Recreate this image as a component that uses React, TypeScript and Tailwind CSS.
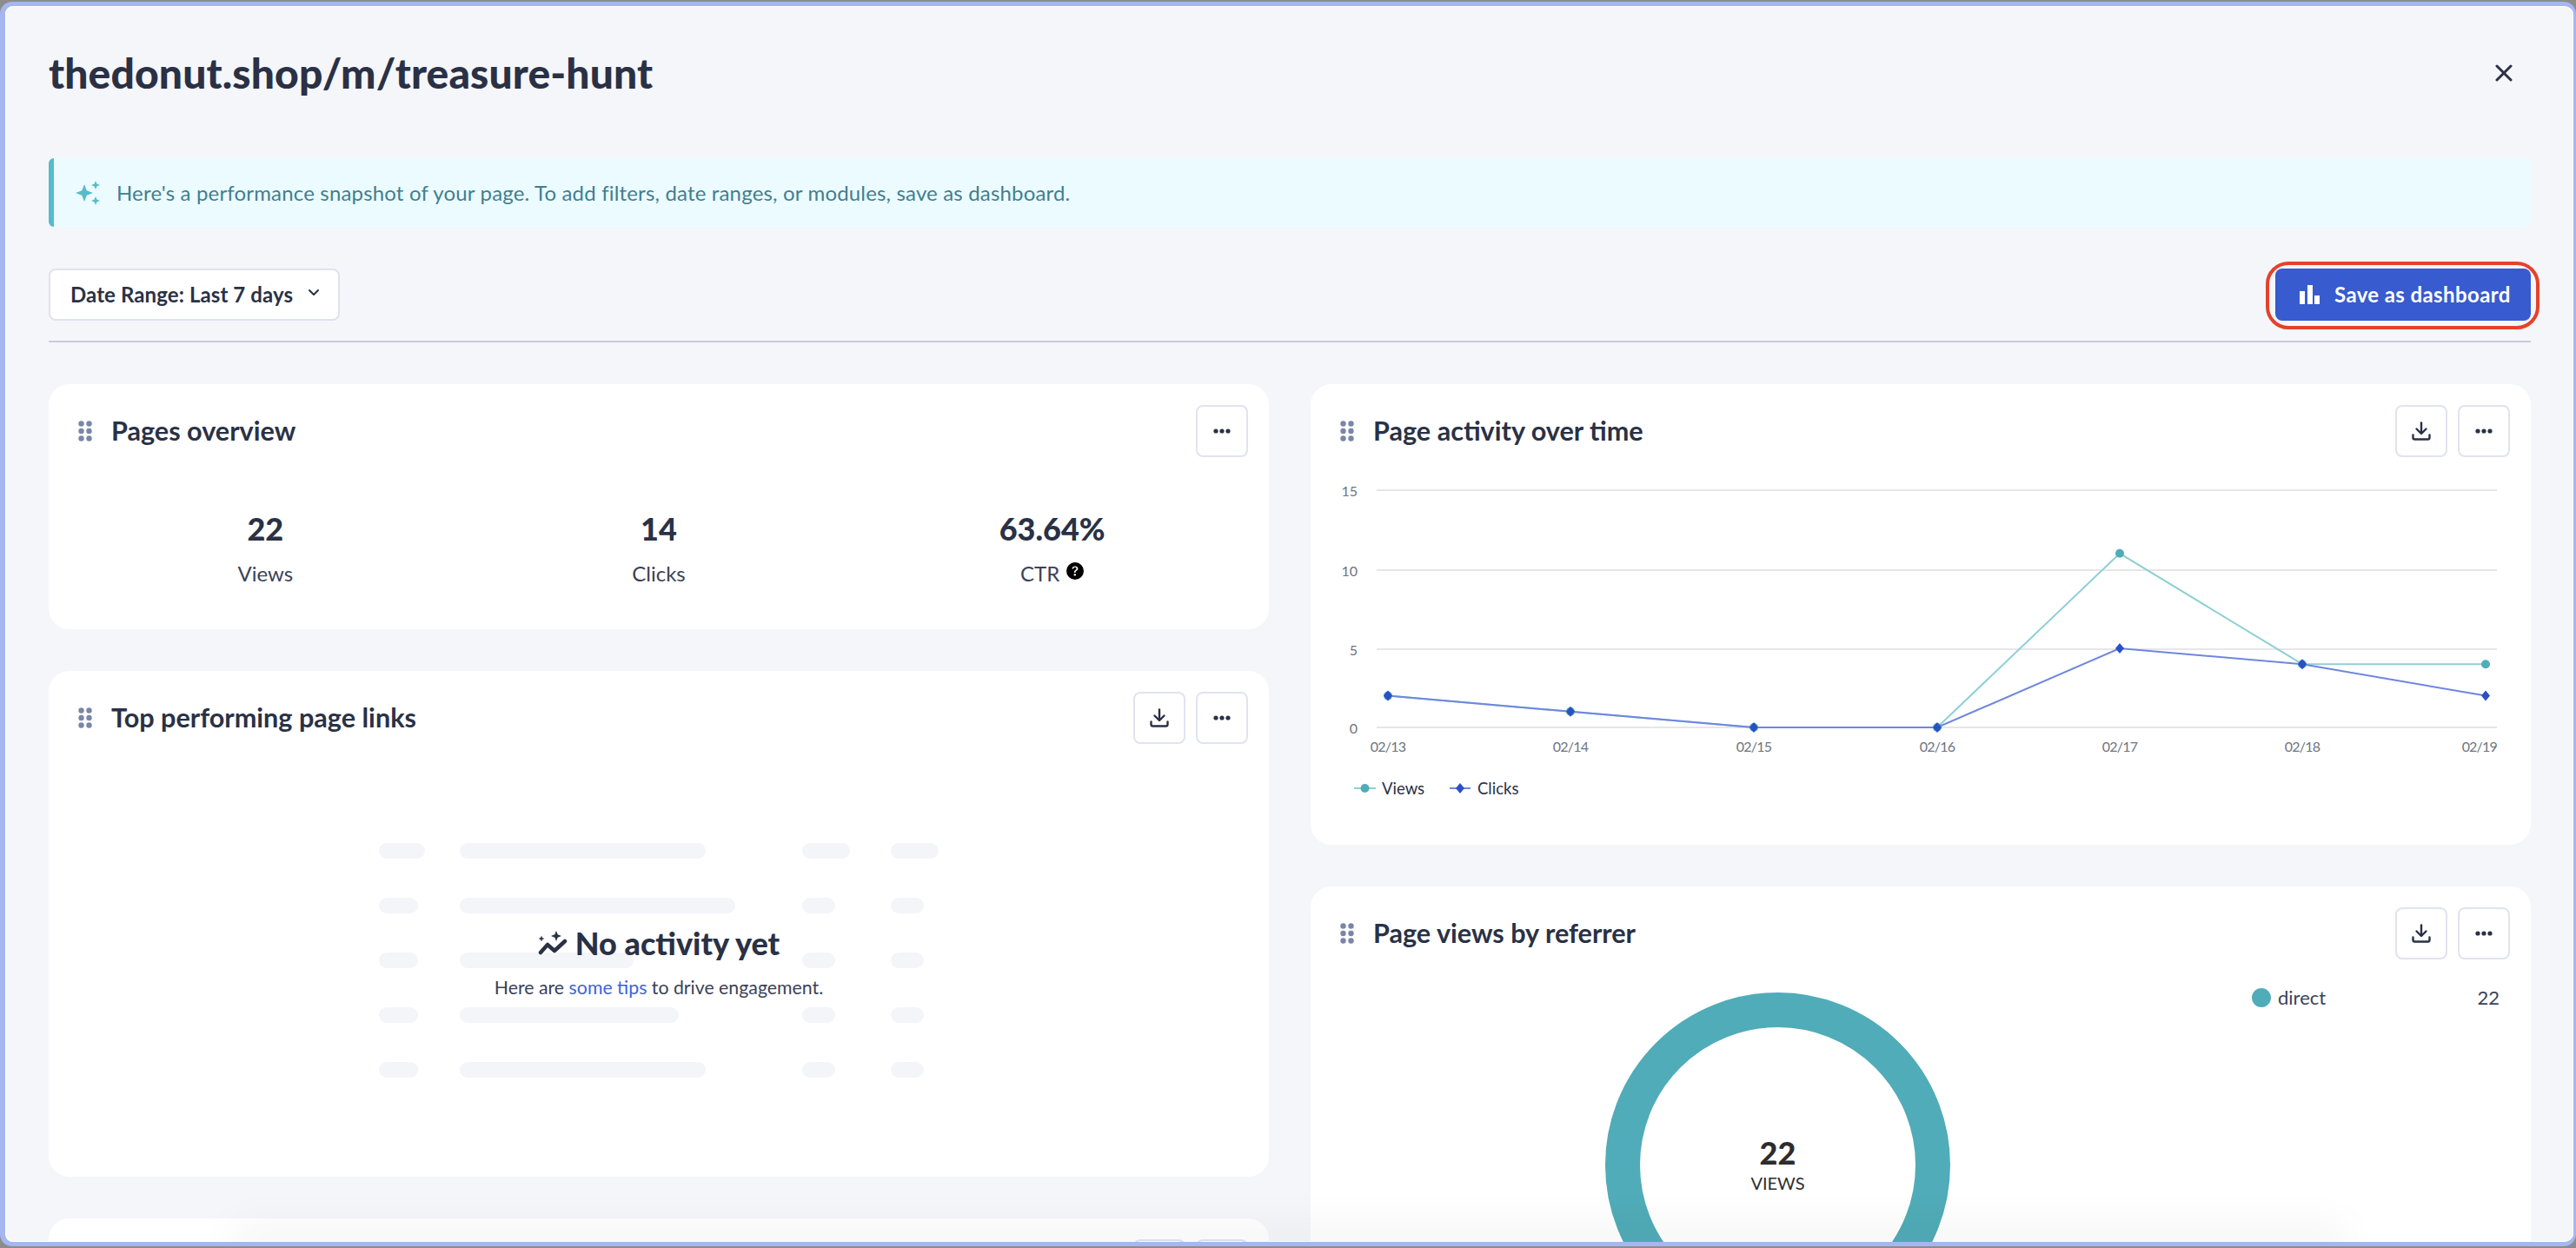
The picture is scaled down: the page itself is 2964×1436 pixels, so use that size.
import { BsQuestionCircleFill } from "react-icons/bs";

const VIEWS = [2, 1, 0, 0, 11, 4, 4];
const CLICKS = [2, 1, 0, 0, 5, 4, 2];
const DAYS = ["02/13", "02/14", "02/15", "02/16", "02/17", "02/18", "02/19"];
const XS = [89, 299, 510, 721, 931, 1141, 1352];
const GRID = [
  { label: "15", y: 38 },
  { label: "10", y: 130 },
  { label: "5", y: 221 },
  { label: "0", y: 311 },
];

const SKELETON = [
  [53, 283, 55, 55],
  [45, 317, 38, 38],
  [45, 200, 38, 38],
  [45, 252, 38, 38],
  [45, 283, 38, 38],
];

function valueY(v: number) {
  return 311 - v * 18.2;
}

function toPoints(values: number[]) {
  return values.map((v, i) => `${XS[i]},${valueY(v)}`).join(" ");
}

function star(cx: number, cy: number, r: number) {
  const k = r * 0.28;
  return `M${cx} ${cy - r}L${cx + k} ${cy - k}L${cx + r} ${cy}L${cx + k} ${cy + k}L${cx} ${cy + r}L${cx - k} ${cy + k}L${cx - r} ${cy}L${cx - k} ${cy - k}Z`;
}

function GripIcon() {
  return (
    <svg width="16" height="24" viewBox="0 0 16 24" className="shrink-0" fill="#7a86a8">
      <circle cx="3.5" cy="3.5" r="3.2" />
      <circle cx="12.5" cy="3.5" r="3.2" />
      <circle cx="3.5" cy="12" r="3.2" />
      <circle cx="12.5" cy="12" r="3.2" />
      <circle cx="3.5" cy="20.5" r="3.2" />
      <circle cx="12.5" cy="20.5" r="3.2" />
    </svg>
  );
}

function DownloadIcon() {
  return (
    <svg width="22" height="22" viewBox="0 0 22 22" fill="none" stroke="#2a3145" strokeWidth="2.4" strokeLinecap="round" strokeLinejoin="round">
      <path d="M11 1.5V13" />
      <path d="M5.5 8.5L11 14L16.5 8.5" />
      <path d="M1.5 15.5V18.5C1.5 19.6 2.4 20.5 3.5 20.5H18.5C19.6 20.5 20.5 19.6 20.5 18.5V15.5" />
    </svg>
  );
}

function DotsIcon() {
  return (
    <svg width="20" height="6" viewBox="0 0 20 6" fill="#2a3145">
      <circle cx="3" cy="3" r="2.6" />
      <circle cx="10" cy="3" r="2.6" />
      <circle cx="17" cy="3" r="2.6" />
    </svg>
  );
}

function IconButton({ children }: { children: React.ReactNode }) {
  return (
    <button className="flex h-[60px] w-[60px] items-center justify-center rounded-[8px] border-2 border-[#e1e3ef] bg-white">
      {children}
    </button>
  );
}

function CardHeader({ title, download = true }: { title: string; download?: boolean }) {
  return (
    <div className="flex h-[60px] items-center justify-between pr-[24px] pl-[34px]">
      <div className="flex items-center gap-[22px]">
        <GripIcon />
        <h3 className="mb-[1px] text-[30.6px] leading-[40px] font-bold text-[#2a3145]">{title}</h3>
      </div>
      <div className="flex gap-[12px]">
        {download ? (
          <IconButton>
            <DownloadIcon />
          </IconButton>
        ) : null}
        <IconButton>
          <DotsIcon />
        </IconButton>
      </div>
    </div>
  );
}

function Stat({ value, label, help }: { value: string; label: string; help?: boolean }) {
  return (
    <div className="flex flex-col items-center">
      <div className="text-[36px] leading-[44px] font-black text-[#2a3145]">{value}</div>
      <div className="mt-[14px] flex items-center gap-[8px] text-[24px] leading-[32px] text-[#3b4256]">
        {label}
        {help ? <BsQuestionCircleFill className="mb-[6px] text-[20px] text-black" /> : null}
      </div>
    </div>
  );
}

function ActivityChart() {
  return (
    <svg width="1404" height="400" viewBox="0 0 1404 400" className="block">
      {GRID.map((g) => (
        <g key={g.label}>
          <line x1="76" x2="1365" y1={g.y} y2={g.y} stroke="#e6e6e9" strokeWidth="2" />
          <text x="54" y={g.y + 7} textAnchor="end" fontSize="16" fill="#6f7480">
            {g.label}
          </text>
        </g>
      ))}
      {DAYS.map((d, i) => (
        <text
          key={d}
          x={i === 6 ? 1365 : XS[i]}
          y="339"
          textAnchor={i === 6 ? "end" : "middle"}
          fontSize="16"
          letterSpacing="-0.8"
          fill="#6f7480"
        >
          {d}
        </text>
      ))}
      <polyline points={toPoints(VIEWS)} fill="none" stroke="#8fd0d6" strokeWidth="2" />
      <polyline points={toPoints(CLICKS)} fill="none" stroke="#6f86de" strokeWidth="2" />
      {VIEWS.map((v, i) => (
        <circle key={i} cx={XS[i]} cy={valueY(v)} r="5" fill="#50acb8" />
      ))}
      {CLICKS.map((v, i) => (
        <path
          key={i}
          d={`M${XS[i]} ${valueY(v) - 6}L${XS[i] + 5} ${valueY(v)}L${XS[i]} ${valueY(v) + 6}L${XS[i] - 5} ${valueY(v)}Z`}
          fill="#2b4fc7"
        />
      ))}
      <line x1="50" x2="75" y1="381" y2="381" stroke="#8fd0d6" strokeWidth="2" />
      <circle cx="62.5" cy="381" r="5" fill="#50acb8" />
      <text x="82" y="388" fontSize="18.5" fill="#2a3145">
        Views
      </text>
      <line x1="160" x2="184" y1="381" y2="381" stroke="#6f86de" strokeWidth="2" />
      <path d="M172 375L177 381L172 387L167 381Z" fill="#2b4fc7" />
      <text x="192" y="388" fontSize="18.5" fill="#2a3145">
        Clicks
      </text>
    </svg>
  );
}

function EmptyActivity() {
  return (
    <div className="relative mt-[114px] w-full">
      <div className="mx-auto flex w-[644px] flex-col gap-[45px]">
        {SKELETON.map((row, i) => (
          <div key={i} className="flex h-[18px]">
            <div className="w-[93px]">
              <div className="h-[18px] rounded-full bg-[#f4f5f9]" style={{ width: row[0] }} />
            </div>
            <div className="w-[394px]">
              <div className="h-[18px] rounded-full bg-[#f4f5f9]" style={{ width: row[1] }} />
            </div>
            <div className="w-[102px]">
              <div className="h-[18px] rounded-full bg-[#f4f5f9]" style={{ width: row[2] }} />
            </div>
            <div>
              <div className="h-[18px] rounded-full bg-[#f4f5f9]" style={{ width: row[3] }} />
            </div>
          </div>
        ))}
      </div>
      <div className="absolute top-[93px] left-0 flex w-full flex-col items-center">
        <div className="flex h-[44px] items-center gap-[9px]">
          <svg width="34" height="30" viewBox="0 0 34 30" fill="#2a3145">
            <path d="M3 26L11 17L19 24L31 13" fill="none" stroke="#2a3145" strokeWidth="4.5" strokeLinecap="round" strokeLinejoin="round" />
            <path d={star(21, 7, 6)} />
            <path d={star(4, 10, 3.5)} />
          </svg>
          <span className="text-[36px] leading-[44px] font-black text-[#2a3145]">No activity yet</span>
        </div>
        <div className="mt-[14px] text-[21.3px] leading-[30px] text-[#3b4256]">
          Here are <span className="text-[#3e63dd]">some tips</span> to drive engagement.
        </div>
      </div>
    </div>
  );
}

export default function App() {
  return (
    <div className="h-[1436px] w-[2964px] overflow-hidden bg-[#8c8c8c] py-[2px] font-['Lato',sans-serif]">
      <div className="relative h-[1432px] overflow-hidden rounded-[14px] border-t-[5px] border-r-[3px] border-b-[5px] border-l-[6px] border-[#a5b6f0] bg-white">
        <div className="h-full rounded-[10px] border border-white bg-[#f5f6fa] pr-[48px] pl-[49px]">
          <div className="flex h-[174px] items-start justify-between pt-[52px]">
            <h1 className="text-[48px] leading-[48px] font-black tracking-[0.13px] text-[#2a3145]">
              thedonut.shop/m/treasure-hunt
            </h1>
            <svg width="20" height="20" viewBox="0 0 20 20" className="mt-[14px] mr-[21px]" stroke="#2a3145" strokeWidth="3" strokeLinecap="round">
              <path d="M2 2L18 18M18 2L2 18" />
            </svg>
          </div>

          <div className="flex h-[79px] items-center gap-[19px] rounded-[6px] border-l-[6px] border-[#56bccb] bg-[#ecfbff] pl-[25px]">
            <svg width="28" height="28" viewBox="0 0 28 28" fill="#56bccb">
              <path d={star(10, 14, 10)} />
              <path d={star(23, 5, 5)} />
              <path d={star(23, 23, 5)} />
            </svg>
            <p className="text-[24px] leading-[32px] tracking-[0.17px] text-[#3f7f8f]">
              Here's a performance snapshot of your page. To add filters, date ranges, or modules, save as dashboard.
            </p>
          </div>

          <div className="mt-[48px] flex items-start justify-between border-b-2 border-[#c9cbdc] pb-[23px]">
            <button className="flex h-[60px] w-[335px] items-center rounded-[8px] border-2 border-[#dfe2ee] bg-white pl-[23px]">
              <span className="text-[24px] leading-[30px] font-bold tracking-[0.1px] text-[#2a3145]">Date Range: Last 7 days</span>
              <svg width="14" height="9" viewBox="0 0 14 9" className="mb-[6px] ml-[17px]" fill="none" stroke="#2a3145" strokeWidth="2" strokeLinecap="round" strokeLinejoin="round">
                <path d="M2 2L7 7L12 2" />
              </svg>
            </button>
            <div className="relative">
              <button className="flex h-[60px] w-[294px] items-center gap-[17px] rounded-[8px] bg-[#385bcf] pl-[28px]">
                <svg width="23" height="22" viewBox="0 0 23 22" fill="#ffffff">
                  <rect x="0" y="7" width="6" height="15" />
                  <rect x="9" y="0" width="6" height="22" />
                  <rect x="17" y="12" width="6" height="10" />
                </svg>
                <span className="text-[24px] leading-[30px] font-bold tracking-[0.39px] text-white">Save as dashboard</span>
              </button>
              <div className="absolute -top-[8px] -right-[10px] -bottom-[10px] -left-[11px] rounded-[26px] border-4 border-[#e8402a]" />
            </div>
          </div>

          <div className="mt-[48px] grid grid-cols-2 gap-[48px]">
            <div className="flex flex-col gap-[48px]">
              <section className="h-[282px] rounded-[24px] bg-white pt-[24px]">
                <CardHeader title="Pages overview" download={false} />
                <div className="mt-[60px] grid grid-cols-3 px-[23px]">
                  <Stat value="22" label="Views" />
                  <Stat value="14" label="Clicks" />
                  <Stat value="63.64%" label="CTR" help />
                </div>
              </section>
              <section className="h-[582px] rounded-[24px] bg-white pt-[24px]">
                <CardHeader title="Top performing page links" />
                <EmptyActivity />
              </section>
              <section className="h-[300px] rounded-[24px] bg-white pt-[24px]">
                <CardHeader title="" />
              </section>
            </div>

            <div className="flex flex-col gap-[48px]">
              <section className="h-[530px] rounded-[24px] bg-white pt-[24px]">
                <CardHeader title="Page activity over time" />
                <ActivityChart />
              </section>
              <section className="h-[600px] rounded-[24px] bg-white pt-[24px]">
                <CardHeader title="Page views by referrer" />
                <div className="mt-[33px] flex items-start pl-[339px]">
                  <div className="mt-[5px] flex h-[397px] w-[397px] flex-col items-center justify-center rounded-full border-[40px] border-[#50acb8]">
                    <div className="text-[36px] leading-[40px] font-black text-[#2d2d2d]">22</div>
                    <div className="text-[20px] leading-[30px] text-[#2d2d2d]">VIEWS</div>
                  </div>
                  <div className="mr-[36px] ml-auto flex w-[285px] items-center">
                    <span className="h-[22px] w-[22px] rounded-full bg-[#50acb8]" />
                    <span className="ml-[8px] text-[22px] leading-[22px] text-[#3b4256]">direct</span>
                    <span className="ml-auto text-[22px] leading-[22px] text-[#3b4256]">22</span>
                  </div>
                </div>
              </section>
            </div>
          </div>
        </div>
        <div className="absolute right-[280px] bottom-0 left-[280px] h-0 shadow-[0_0_50px_18px_rgba(0,0,0,0.05)]" />
      </div>
    </div>
  );
}
